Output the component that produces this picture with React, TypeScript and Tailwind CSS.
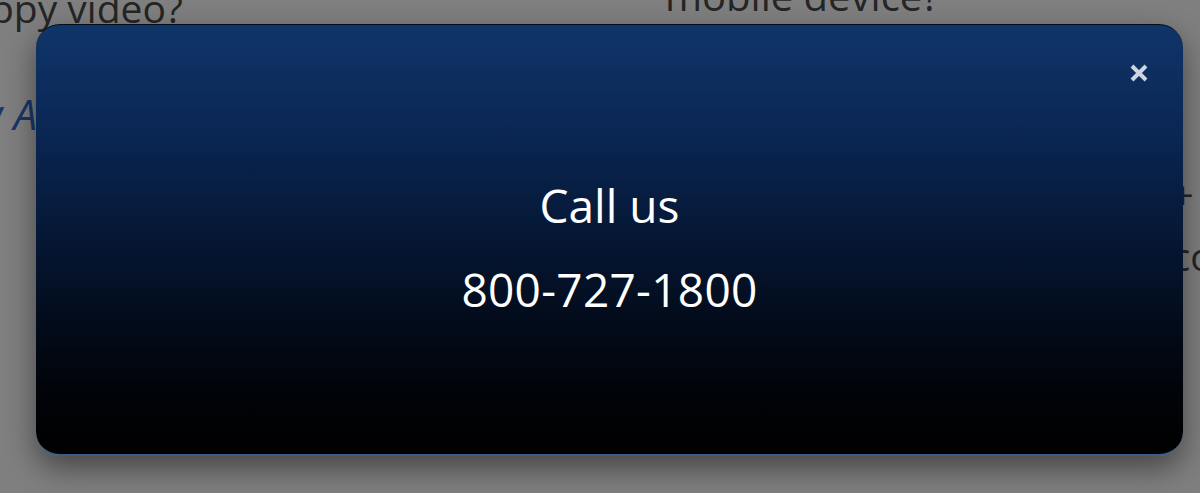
import React from "react";

export default function App() {
  return (
    <div className="relative w-[1200px] h-[493px] overflow-hidden bg-white font-['Open_Sans','Liberation_Sans',sans-serif]">
      {/* page behind the dialog */}
      <div className="flex -mt-[16px]">
        <div className="w-[665px] shrink-0 -ml-[82px] flex flex-col">
          <div className="text-[39px] leading-[48px] text-[#4a4a4a] whitespace-nowrap">Choppy video?</div>
          <div className="mt-[58px] text-[42px] leading-[48px] italic text-[#2f6fd0] whitespace-nowrap">View All FAQs</div>
        </div>
        <div className="w-[440px] shrink-0 ml-[82px] flex flex-col">
          <div className="text-[40px] leading-[40px] text-[#4a4a4a] whitespace-nowrap -mt-[8px]">mobile device?</div>
        </div>
        <div className="shrink-0 ml-[67px] flex flex-col text-[38px] text-[#4a4a4a] whitespace-nowrap">
          <div className="mt-[190px] leading-[40px]">+ Add</div>
          <div className="mt-[22px] leading-[40px]">con</div>
        </div>
      </div>

      {/* overlay */}
      <div className="absolute inset-0 bg-black/50" />

      {/* dialog */}
      <div className="absolute left-[36px] top-[24px] w-[1147px] h-[432px] rounded-[24px] border-t border-t-[#050d1a] border-b-2 border-b-[#3c5d86] bg-[linear-gradient(to_bottom,#0f3569_0%,#0b2857_22%,#061a3a_45%,#030c1c_68%,#010409_85%,#000000_100%)] shadow-[0_12px_30px_rgba(0,0,0,0.45)] flex flex-col items-center text-white">
        <button className="absolute right-[34px] top-[38px] w-[20px] h-[20px]" aria-label="Close">
          <svg viewBox="0 0 20 20" className="w-[20px] h-[20px]">
            <path d="M3 3 L17 17 M17 3 L3 17" stroke="#cdd5e0" strokeWidth="4" strokeLinecap="butt" />
          </svg>
        </button>
        <div className="mt-[152px] text-[46px] leading-[56px]">Call us</div>
        <div className="mt-[28px] text-[46px] leading-[56px] tracking-[0.3px]">800-727-1800</div>
      </div>
    </div>
  );
}
